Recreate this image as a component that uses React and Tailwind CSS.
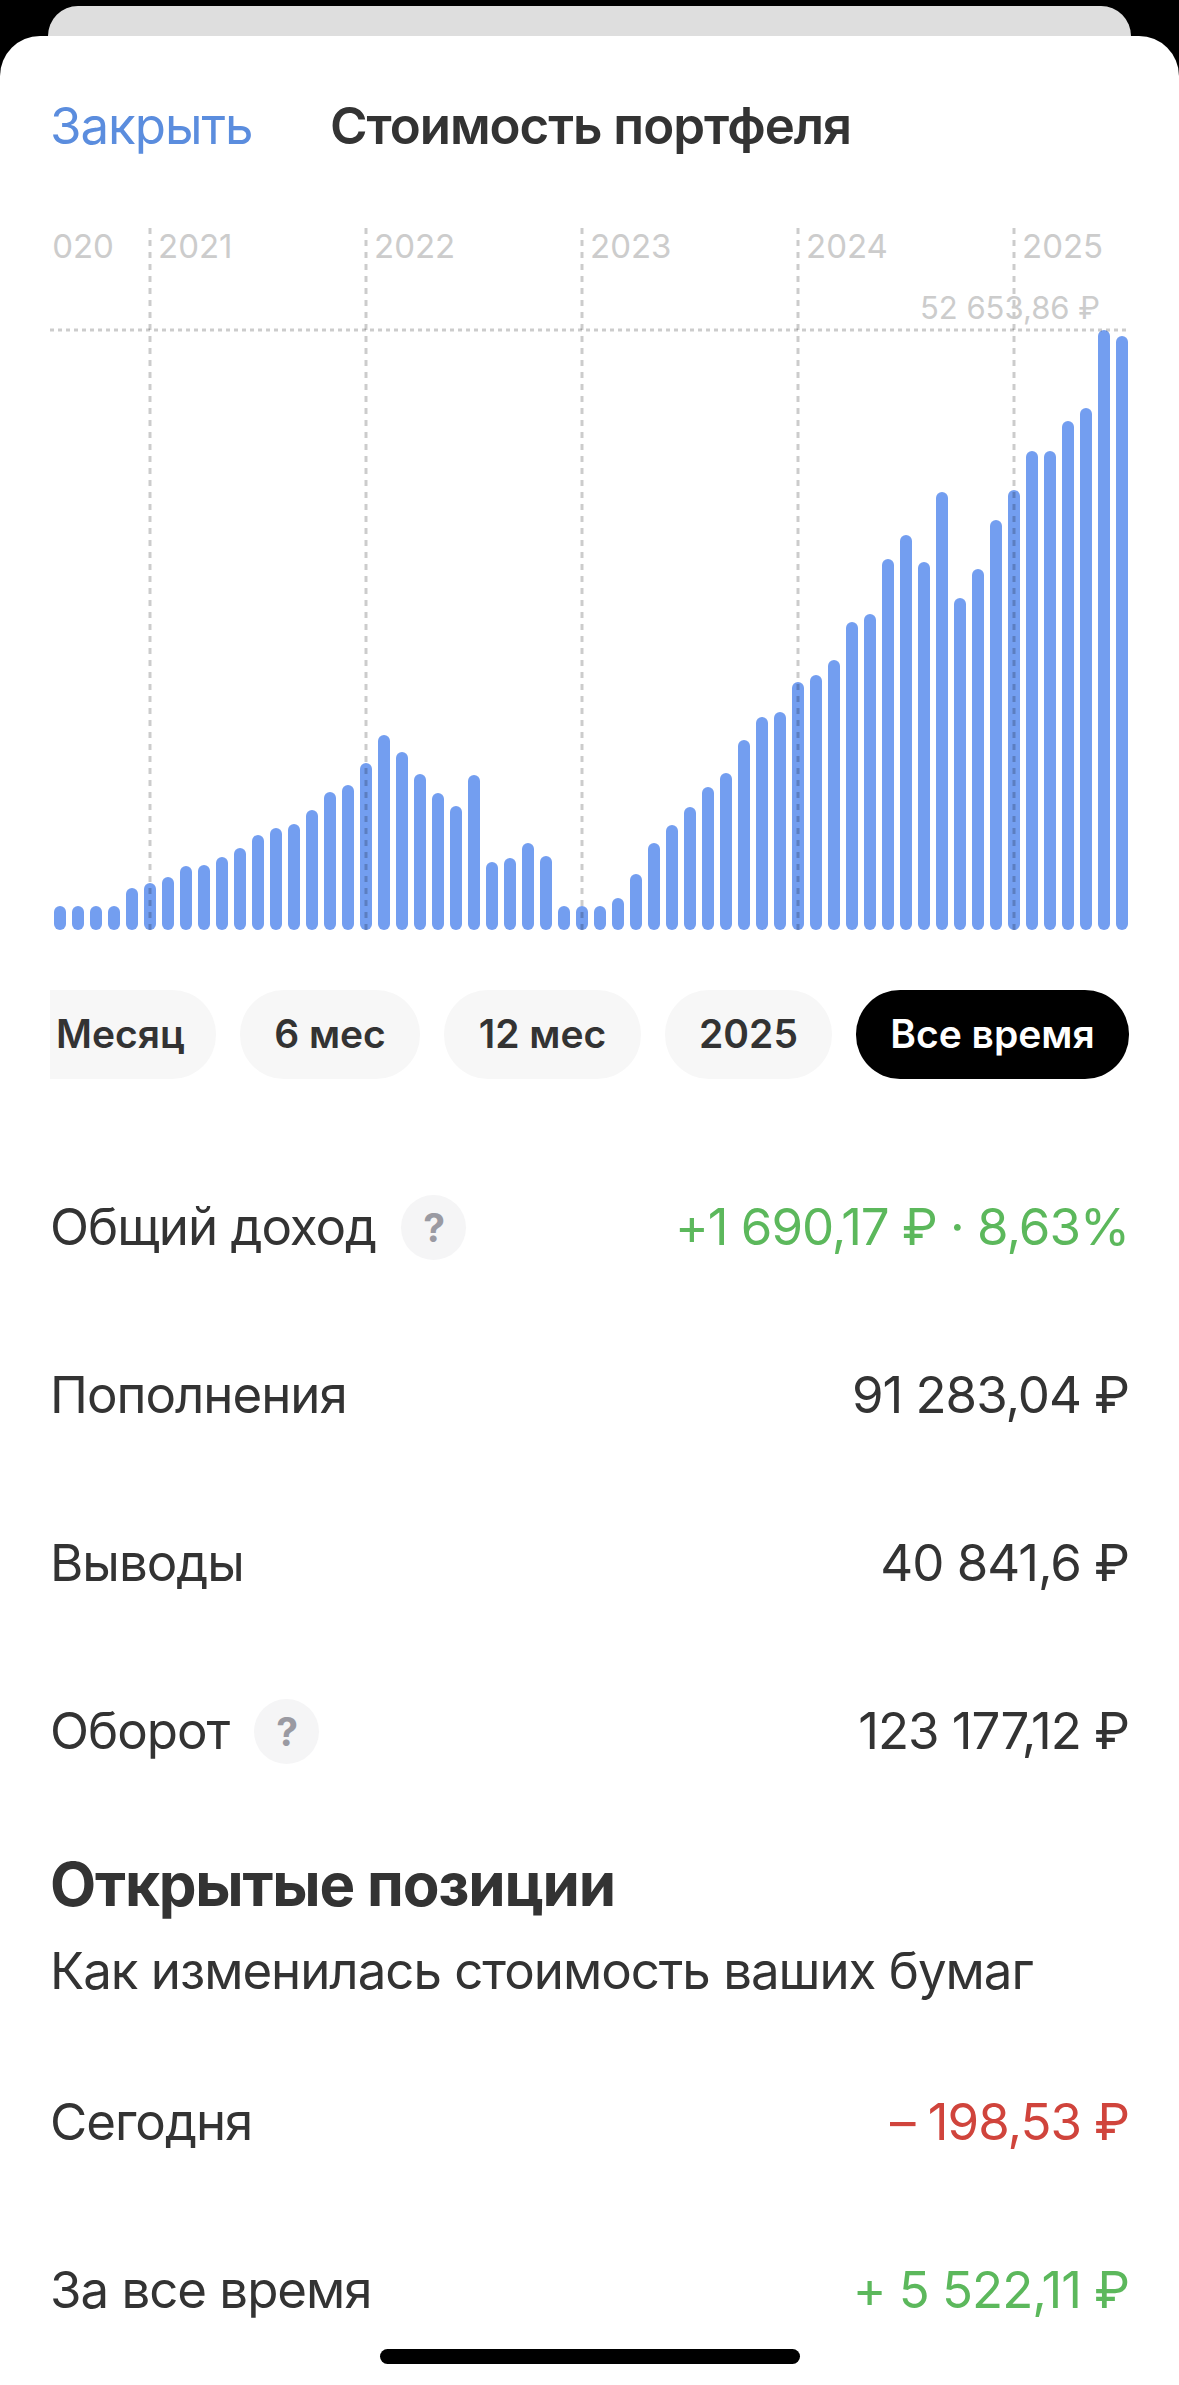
const BAR_TOPS = [
  890, 890, 890, 890, 872, 867, 861, 850, 849, 841, 832, 819, 812, 808, 794, 776, 769, 747, 719, 736,
  758, 777, 790, 759, 846, 842, 827, 840, 890, 890, 890, 882, 858, 827, 809, 791, 771, 757, 724, 701,
  696, 666, 659, 644, 606, 598, 543, 519, 546, 476, 582, 553, 504, 474, 435, 435, 405, 392, 314, 320,
];

const CHART_TOP = 212;
const CHART_LEFT = 50;
const CHART_BOTTOM = 914;
const GRID_LINES = [150, 366, 582, 798, 1014];
const YEARS = [
  { label: "2020", width: "w-[126px]", pad: "ml-[-18px]" },
  { label: "2021", width: "w-[216px]", pad: "" },
  { label: "2022", width: "w-[216px]", pad: "" },
  { label: "2023", width: "w-[216px]", pad: "" },
  { label: "2024", width: "w-[216px]", pad: "" },
  { label: "2025", width: "w-[216px]", pad: "" },
];
const PERIODS = [
  { label: "Месяц", cls: "w-[166px] justify-start pl-[6px] rounded-l-none bg-[#f7f7f7] text-[#333333]" },
  { label: "6 мес", cls: "w-[180px] justify-center bg-[#f7f7f7] text-[#333333]" },
  { label: "12 мес", cls: "w-[197px] justify-center bg-[#f7f7f7] text-[#333333]" },
  { label: "2025", cls: "w-[167px] justify-center bg-[#f7f7f7] text-[#333333]" },
  { label: "Все время", cls: "w-[273px] justify-center bg-black text-white" },
];

function PortfolioChart() {
  return (
    <div className="relative mt-[72px] h-[702px] w-[1081px]">
      <svg width="1081" height="702" viewBox="0 0 1081 702" className="block">
        {BAR_TOPS.map((top, i) => (
          <rect
            key={i}
            x={54 + i * 18 - CHART_LEFT}
            y={top - CHART_TOP}
            width="12"
            height={CHART_BOTTOM - top}
            rx="6"
            fill="#739ef0"
          />
        ))}
        <line x1="0" x2="1076" y1="102" y2="102" stroke="#000" strokeOpacity="0.2" strokeWidth="3" strokeDasharray="4 4" />
        {GRID_LINES.map((x) => (
          <line
            key={x}
            x1={x - CHART_LEFT}
            x2={x - CHART_LEFT}
            y1="0"
            y2="702"
            stroke="#000"
            strokeOpacity="0.2"
            strokeWidth="3"
            strokeDasharray="6 6"
          />
        ))}
      </svg>
      <div className="absolute left-0 top-[-2px] flex w-[1081px] overflow-hidden text-[33px] leading-[40px] text-[#cccccc]">
        {YEARS.map((y) => (
          <div key={y.label} className={`shrink-0 ${y.width} ${y.pad}`}>
            {y.label}
          </div>
        ))}
      </div>
      <div className="absolute right-[31px] top-[60px] text-[31px] leading-[40px] text-[#cccccc]">52 653,86 ₽</div>
    </div>
  );
}

function Hint() {
  return (
    <span className="ml-[25px] flex h-[65px] w-[65px] items-center justify-center rounded-full bg-[#f5f5f6] text-[39px] font-bold leading-none text-[#9a9aa2]">
      ?
    </span>
  );
}

function Row({ label, value, valueColor = "text-[#333333]", hint = false }) {
  return (
    <div className="flex h-[168px] items-center justify-between">
      <div className="flex items-center">
        <span>{label}</span>
        {hint && <Hint />}
      </div>
      <span className={valueColor}>{value}</span>
    </div>
  );
}

export default function App() {
  return (
    <div className="relative h-[2385px] w-[1179px] overflow-hidden bg-black font-['Inter',sans-serif] text-[#333333]">
      <div className="mx-[48px] mt-[6px] h-[30px] rounded-t-[36px] bg-[#dedede]" />
      <div className="h-[2349px] rounded-t-[40px] bg-white px-[50px]">
        <header className="flex items-center pt-[60px] text-[51px] leading-[60px] tracking-[-0.02em]">
          <span className="w-[280px] text-[#5b8dde]">Закрыть</span>
          <span className="font-semibold">Стоимость портфеля</span>
        </header>

        <PortfolioChart />

        <div className="mt-[60px] flex gap-[24px] text-[39px] font-semibold">
          {PERIODS.map((p) => (
            <div key={p.label} className={`flex h-[89px] items-center rounded-[44px] ${p.cls}`}>
              {p.label}
            </div>
          ))}
        </div>

        <div className="mt-[64px] text-[51px] tracking-[-0.02em]">
          <Row label="Общий доход" value="+1 690,17 ₽ · 8,63%" valueColor="text-[#5cb85c]" hint />
          <Row label="Пополнения" value="91 283,04 ₽" />
          <Row label="Выводы" value="40 841,6 ₽" />
          <Row label="Оборот" value="123 177,12 ₽" hint />
        </div>

        <h2 className="mt-[34px] text-[60px] font-bold leading-[70px] tracking-[-0.02em]">Открытые позиции</h2>
        <p className="mt-[22px] text-[51px] leading-[60px] tracking-[-0.02em]">Как изменилась стоимость ваших бумаг</p>

        <div className="mt-[37px] text-[51px] tracking-[-0.02em]">
          <Row label="Сегодня" value="– 198,53 ₽" valueColor="text-[#d0443c]" />
          <Row label="За все время" value="+ 5 522,11 ₽" valueColor="text-[#5cb85c]" />
        </div>
      </div>
      <div className="absolute bottom-[21px] left-[380px] h-[15px] w-[420px] rounded-full bg-black" />
    </div>
  );
}
